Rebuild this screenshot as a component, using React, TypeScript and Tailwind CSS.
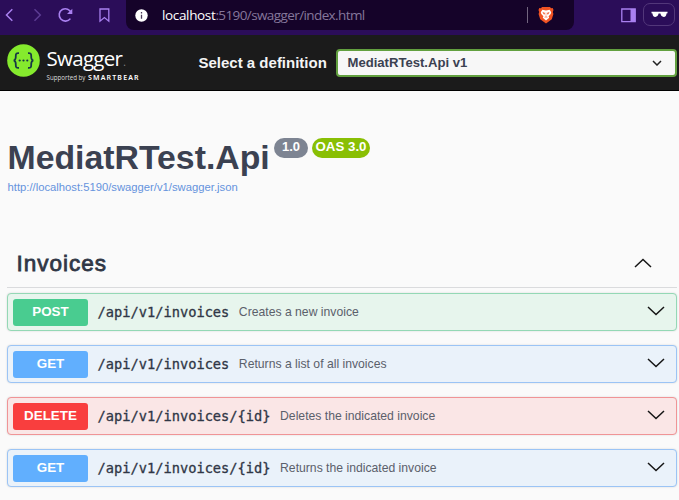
type Operation = {
  method: string;
  path: string;
  summary: string;
  box: string;
  badge: string;
};

const operations: Operation[] = [
  {
    method: "POST",
    path: "/api/v1/invoices",
    summary: "Creates a new invoice",
    box: "border-[#94d8b5] bg-[#e7f5ed]",
    badge: "bg-[#49cc90]",
  },
  {
    method: "GET",
    path: "/api/v1/invoices",
    summary: "Returns a list of all invoices",
    box: "border-[#9bc4f5] bg-[#eaf2fa]",
    badge: "bg-[#61affe]",
  },
  {
    method: "DELETE",
    path: "/api/v1/invoices/{id}",
    summary: "Deletes the indicated invoice",
    box: "border-[#f09496] bg-[#fae6e6]",
    badge: "bg-[#f93e3e]",
  },
  {
    method: "GET",
    path: "/api/v1/invoices/{id}",
    summary: "Returns the indicated invoice",
    box: "border-[#9bc4f5] bg-[#eaf2fa]",
    badge: "bg-[#61affe]",
  },
];

function BrowserBar() {
  return (
    <div className="flex h-[35px] items-start bg-[#2b0d59]">
      <svg className="h-[30px] w-[126px] shrink-0" viewBox="0 0 126 30" fill="none" stroke="#a980f0" strokeWidth="1.5">
        <path d="M12.3 9.3 6.5 15l5.8 5.8" />
        <path d="M34.5 9.3 40.3 15l-5.8 5.8" stroke="#5c3c93" />
        <path d="M71.300 13A6.200 6.200 0 1 0 70.400 18.600" strokeWidth="1.600" />
        <path d="M72.300 8.800v5.300h-5.300z" fill="#a980f0" stroke="none" />
        <path d="M100 9h8.8v12.2l-4.4-3.6-4.4 3.6z" strokeWidth="1.3" />
      </svg>
      <div className="flex h-[30px] w-[448px] shrink-0 items-center rounded-b-lg bg-[#150329] font-['Open_Sans',sans-serif]">
        <svg className="ml-[9px] size-[13px]" viewBox="0 0 13 13">
          <circle cx="6.5" cy="6.5" r="6.2" fill="#fff" />
          <path d="M6.5 5.7v4M6.5 3.1v1.3" stroke="#493b59" strokeWidth="1.3" />
        </svg>
        <p className="ml-[14px] text-[13.5px] leading-[20px] tracking-[-0.600px] whitespace-nowrap text-[#85779b]">
          <span className="tracking-[-0.350px] text-white">localhost</span>:5190/swagger/index.html
        </p>
        <div className="mr-[10px] ml-auto h-4 w-px bg-[#72657f]" />
        <svg className="mr-[20px] h-[18px] w-[16px]" viewBox="0 0 16 18">
          <path d="m4 1-1 1.2L1.3 2 .5 4l.7 2-.6 2 1.6 5.3L8 17.5l5.8-4.2L15.4 8l-.6-2 .7-2-.8-2-1.7.2L12 1z" fill="#f15323" />
          <path d="m4.4 3.8 3.6.7 3.6-.7 1.6 2.5-.5 1.6-2.1 2.4.6 1.5L8 14.5l-3.2-2.7.6-1.5-2.1-2.4-.5-1.6z" fill="#fff" />
          <path d="m4.8 6.4 1.9.5-.5 1.5zm6.4 0-1.9.5.5 1.5zM8 6.6v4.1M6.4 11.2 8 10.7l1.6.5" fill="#f15323" stroke="#f15323" strokeWidth=".4" />
        </svg>
      </div>
      <svg className="mt-[8px] ml-[47px] h-[15px] w-[15px] shrink-0" viewBox="0 0 15 15">
        <path d="M.8 1h13.4v12.7H.8z" fill="none" stroke="#a980f0" strokeWidth="1.3" />
        <path d="M9.5 1h4.8v12.8H9.5z" fill="#a980f0" />
      </svg>
      <div className="mt-[3px] ml-[7px] flex h-[23px] w-[32px] shrink-0 items-center justify-center rounded-[7px] border border-[#52377a]">
        <svg className="h-[7px] w-[17px]" viewBox="0 0 17 7">
          <path d="M.5.8h16v1.4l-1 .2c-.2 2-.9 3.5-2.8 3.5-1.8 0-2.7-1.1-3.3-3.3h-1.8C7 4.8 6.1 5.9 4.3 5.9 2.4 5.9 1.7 4.4 1.5 2.4l-1-.2z" fill="#fff" />
        </svg>
      </div>
    </div>
  );
}

function SwaggerLogo() {
  return (
    <div className="flex h-full w-[141px] shrink-0 text-white">
      <svg className="mt-[9px] ml-[7px] size-[33px] shrink-0" viewBox="0 0 33 33" fill="none" stroke="#173647" strokeWidth="1.8">
        <circle cx="16.5" cy="16.5" r="16.3" fill="#85ea2d" stroke="none" />
        <path d="M12 9.2c-2.6-.2-3.3.6-3.2 2.7.1 2.8.1 4.2-2.1 4.6 2.2.4 2.2 1.8 2.1 4.6-.1 2.1.6 2.9 3.2 2.700M21 9.200c2.600-.2 3.300.6 3.200 2.700-.1 2.800-.1 4.200 2.100 4.600-2.200.4-2.200 1.800-2.100 4.600.1 2.100-.6 2.900-3.200 2.700" />
        <g fill="#173647" stroke="none">
          <circle cx="12.7" cy="16.5" r="1.1" />
          <circle cx="16.5" cy="16.5" r="1.1" />
          <circle cx="20.3" cy="16.5" r="1.1" />
        </g>
      </svg>
      <div className="ml-[6.5px] flex flex-col font-['Open_Sans',sans-serif] whitespace-nowrap">
        <p className="mt-[11px] h-[25px] text-[20.5px] leading-[25px] tracking-[-0.7px]">
          Swagger<span className="ml-[1px] text-[10px] text-[#888]">.</span>
        </p>
        <p className="mt-[2px] text-[6.2px] leading-[9px] text-[#ddd]">
          Supported by <span className="ml-[1px] font-['Noto_Sans',sans-serif] text-[7px] font-semibold tracking-[1.150px] text-white">SMARTBEAR</span>
        </p>
      </div>
    </div>
  );
}

function TopBar() {
  return (
    <header className="flex h-[56px] items-center border-b border-black bg-[#1b1b1b]">
      <SwaggerLogo />
      <p className="ml-[57.5px] w-[137.5px] shrink-0 text-[15px] leading-5 font-bold whitespace-nowrap text-[#f4f4f4]">Select a definition</p>
      <div className="flex h-[28px] w-[341px] items-center rounded-[4px] border-2 border-[#62a03f] bg-[#f7f7f7] pr-[13px] pl-[9.5px]">
        <span className="text-[13.1px] leading-5 font-bold text-[#3b4151]">MediatRTest.Api v1</span>
        <svg className="ml-auto h-[6px] w-[10px]" viewBox="0 0 10 6" fill="none" stroke="#222" strokeWidth="1.5">
          <path d="m1 1 4 4 4-4" />
        </svg>
      </div>
    </header>
  );
}

function Chevron() {
  return (
    <svg className="h-[10px] w-[18px] shrink-0" viewBox="0 0 18 10" fill="none" stroke="#151515" strokeWidth="1.5">
      <path d="m1 1 8 7.5L17 1" />
    </svg>
  );
}

function OperationRow({ operation }: { operation: Operation }) {
  return (
    <div className={"flex h-[38px] items-center rounded-[4px] border pr-[11px] pl-[5px] shadow-[0_0_2px_rgba(0,0,0,0.15)] " + operation.box}>
      <span className={"flex h-[27px] w-[75px] shrink-0 items-center justify-center rounded-[3px] text-[13.4px] leading-5 font-bold text-white " + operation.badge}>
        {operation.method}
      </span>
      <span className="ml-[9.5px] font-['DejaVu_Sans_Mono',monospace] text-[13.7px] leading-5 whitespace-nowrap text-[#303746] [-webkit-text-stroke:0.3px_#303746]">
        {operation.path}
      </span>
      <span className="ml-[9.5px] text-[12.2px] leading-5 whitespace-nowrap text-[#5b606b]">{operation.summary}</span>
      <span className="mb-[3px] ml-auto flex">
        <Chevron />
      </span>
    </div>
  );
}

export default function App() {
  return (
    <div className="h-[500px] w-[679px] overflow-hidden bg-[#fafafa] font-['Liberation_Sans',Arial,sans-serif]">
      <BrowserBar />
      <TopBar />
      <main className="pr-[2px] pl-[7px]">
        <div className="flex h-[87px] items-start pt-[46px]">
          <h1 className="ml-[0.5px] w-[262px] text-[33.8px] leading-[40px] font-bold whitespace-nowrap text-[#3b4151]">MediatRTest.Api</h1>
          <span className="mt-px ml-[4.5px] flex h-[20px] w-[34px] items-center justify-center rounded-full bg-[#7d8492] pb-[2px] text-[13px] font-bold text-white">1.0</span>
          <span className="mt-px ml-[4px] flex h-[20px] w-[58px] items-center justify-center rounded-full bg-[#89bf04] pb-[2px] text-[13.3px] font-bold whitespace-nowrap text-white">OAS 3.0</span>
        </div>
        <p className="ml-[0.5px] flex h-[18px] items-center text-[11.25px] text-[#6593dd]">http://localhost:5190/swagger/v1/swagger.json</p>
        <section className="mt-[44px]">
          <div className="flex h-[48px] items-center justify-between border-b border-[#dadbdd] pr-[25px] pl-[9.5px]">
            <h2 className="text-[22.5px] leading-8 tracking-[1px] text-[#303746] [-webkit-text-stroke:0.8px_#303746]">Invoices</h2>
            <span className="mb-[2px] flex rotate-180">
              <Chevron />
            </span>
          </div>
          <div className="mt-[5px] flex flex-col gap-[14px]">
            {operations.map((operation) => (
              <OperationRow key={operation.method + operation.path} operation={operation} />
            ))}
          </div>
        </section>
      </main>
    </div>
  );
}
